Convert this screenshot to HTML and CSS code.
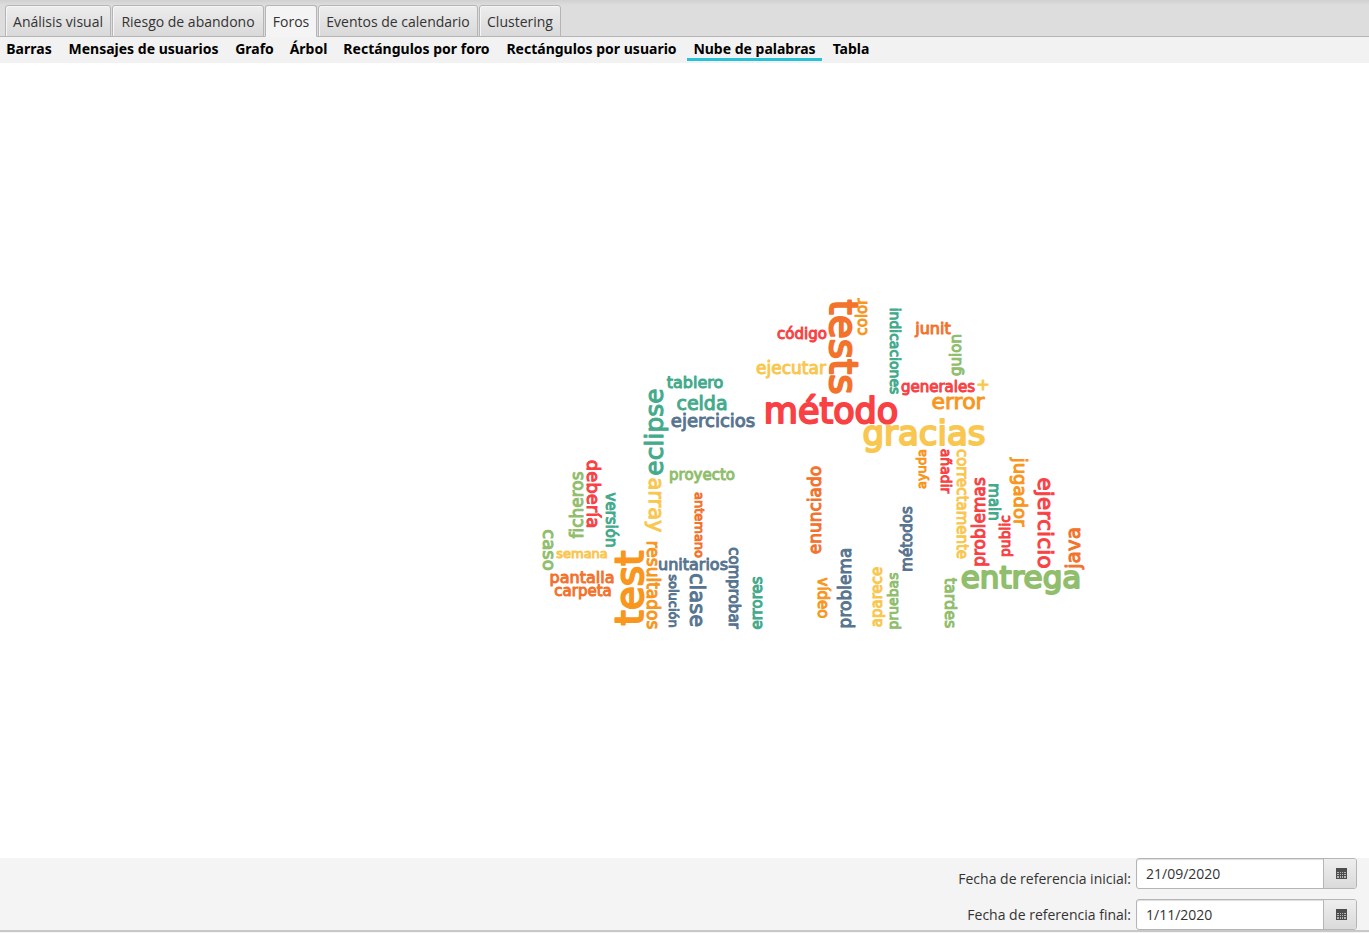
FILE: index.html
```html
<!DOCTYPE html>
<html lang="es">
<head>
<meta charset="utf-8">
<title>Foros</title>
<link rel="stylesheet" href="styles.css">
</head>
<body>
<nav class="tabs" aria-label="Secciones">
  <button class="tab">Análisis visual</button>
  <button class="tab">Riesgo de abandono</button>
  <button class="tab tab-active">Foros</button>
  <button class="tab">Eventos de calendario</button>
  <button class="tab">Clustering</button>
</nav>
<nav class="subtabs" aria-label="Gráficos">
  <button class="subtab">Barras</button>
  <button class="subtab">Mensajes de usuarios</button>
  <button class="subtab">Grafo</button>
  <button class="subtab">Árbol</button>
  <button class="subtab">Rectángulos por foro</button>
  <button class="subtab">Rectángulos por usuario</button>
  <button class="subtab subtab-active">Nube de palabras</button>
  <button class="subtab">Tabla</button>
</nav>
<main class="chart">
  <svg class="cloud" id="cloud" viewBox="0 63 1369 795" role="img" aria-label="Nube de palabras"></svg>
</main>
<form class="dates">
  <label class="date-label date-label-first" for="start">Fecha de referencia inicial:</label>
  <div class="date-field">
    <input class="date-input" id="start" type="text" value="21/09/2020">
    <button class="date-button" type="button" aria-label="Elegir fecha inicial">
      <svg class="calendar" viewBox="0 0 11 11"><path fill="#4d4d4d" d="M0 0h11v11H0z"/><path fill="#b4b4b4" d="M1 4h2v1H1zM4 4h1v1H4zM6 4h1v1H6zM8 4h2v1H8zM1 6h2v1H1zM4 6h1v1H4zM6 6h1v1H6zM8 6h2v1H8zM1 8h2v2H1zM4 8h1v2H4zM6 8h1v2H6zM8 8h2v2H8z"/></svg>
    </button>
  </div>
  <label class="date-label" for="end">Fecha de referencia final:</label>
  <div class="date-field">
    <input class="date-input" id="end" type="text" value="1/11/2020">
    <button class="date-button" type="button" aria-label="Elegir fecha final">
      <svg class="calendar" viewBox="0 0 11 11"><path fill="#4d4d4d" d="M0 0h11v11H0z"/><path fill="#b4b4b4" d="M1 4h2v1H1zM4 4h1v1H4zM6 4h1v1H6zM8 4h2v1H8zM1 6h2v1H1zM4 6h1v1H4zM6 6h1v1H6zM8 6h2v1H8zM1 8h2v2H1zM4 8h1v2H4zM6 8h1v2H6zM8 8h2v2H8z"/></svg>
    </button>
  </div>
</form>
<script src="cloud.js"></script>
</body>
</html>
```

FILE: styles.css
```css
* { box-sizing: border-box; }

body {
  margin: 0;
  min-height: 100vh;
  display: flex;
  flex-direction: column;
  background: #f4f4f4;
  color: #333;
  font: 14px/20px "Segoe UI", "Open Sans", "Noto Sans", sans-serif;
}

button, input { font: inherit; color: inherit; }

.tabs {
  display: grid;
  grid-template-columns: 106px 152px 52px 160px 82px;
  gap: 1px;
  height: 37px;
  padding: 5px 5px 0;
  background: linear-gradient(#d0d0d0, #dddddd 5px);
  border-bottom: 1px solid #b5b5b5;
}

.tab {
  height: 32px;
  padding: 2px 0 0;
  border: 1px solid #b5b5b5;
  border-radius: 3px 3px 0 0;
  background: linear-gradient(#ededed, #d9d9d9);
  box-shadow: inset 1px 1px 0 #f6f6f6;
  white-space: nowrap;
}

.tab-active {
  background: #f4f4f4;
  border-bottom-color: #f4f4f4;
}

.subtabs {
  display: grid;
  grid-template-columns: 58px 163px 51px 49px 159px 183px 135px 50px;
  gap: 4px;
  height: 26px;
  background: #f2f2f2;
}

.subtab {
  height: 24px;
  padding: 2px 0 0;
  border: 0;
  border-bottom: 3px solid transparent;
  background: none;
  color: #000;
  font: bold 14px/19px Tahoma, "Noto Sans", sans-serif;
  white-space: nowrap;
}

.subtab-active { border-bottom-color: #26c2d8; }

.chart {
  flex: 1 1 0;
  display: flex;
  min-height: 0;
  background: #fff;
}

.cloud { width: 100%; }

.word {
  font-family: "Comic Sans MS", "DejaVu Sans", sans-serif;
  text-anchor: middle;
  fill: currentColor;
  stroke: currentColor;
  stroke-width: 1px;
  stroke-linejoin: round;
}

.word-large { stroke-width: 2px; }

.red { color: #f94144; }
.orange { color: #f3722c; }
.amber { color: #f8961e; }
.yellow { color: #f9c74f; }
.green { color: #90be6d; }
.teal { color: #43aa8b; }
.blue { color: #577590; }

.dates {
  display: grid;
  grid-template-columns: 1fr 221px;
  gap: 10px 5px;
  margin: 0 0 1px;
  padding: 0 12px 0 0;
  border-bottom: 2px solid #c8c8c8;
  background: #f4f4f4;
}

.date-label {
  align-self: center;
  justify-self: end;
}

.date-label-first { padding-top: 10px; }

.date-field {
  display: flex;
  height: 31px;
  border: 1px solid #b5b5b5;
  border-radius: 3px;
  background: #fff;
  box-shadow: inset 0 1px 1px #ddd;
}

.date-input {
  flex: 1;
  min-width: 0;
  padding: 0 9px;
  border: 0;
  background: none;
}

.date-button {
  display: flex;
  align-items: center;
  justify-content: center;
  width: 33px;
  padding: 0 0 0 2px;
  border: 0;
  border-left: 1px solid #b5b5b5;
  border-radius: 0 2px 2px 0;
  background: linear-gradient(#eeeeee, #dadada);
}

.calendar {
  width: 11px;
  height: 11px;
}
```

FILE: cloud.js
```js
// text, colour, direction (0 across, 90 down, -90 up), start, end, baseline
const words = [
  ["código", "red", 0, 777, 826, 339],
  ["ejecutar", "yellow", 0, 755, 826, 374],
  ["método", "red", 0, 763, 899, 423],
  ["gracias", "yellow", 0, 863, 985, 445],
  ["generales", "red", 0, 900, 976, 392],
  ["+", "yellow", 0, 976, 989, 390],
  ["error", "amber", 0, 931, 985, 409],
  ["junit", "orange", 0, 915, 951, 334],
  ["tablero", "teal", 0, 667, 723, 388],
  ["celda", "teal", 0, 677, 727, 410],
  ["ejercicios", "blue", 0, 671, 755, 427],
  ["proyecto", "green", 0, 669, 734, 480],
  ["semana", "yellow", 0, 556, 608, 558],
  ["pantalla", "orange", 0, 549, 614, 583],
  ["carpeta", "orange", 0, 554, 611, 596],
  ["unitarios", "blue", 0, 659, 727, 570],
  ["entrega", "green", 0, 960, 1081, 588],
  ["tests", "orange", 90, 300, 394, 830],
  ["indicaciones", "teal", 90, 307, 395, 890],
  ["array", "yellow", 90, 478, 532, 649],
  ["caso", "green", 90, 529, 570, 543],
  ["debería", "red", 90, 459, 528, 587],
  ["versión", "teal", 90, 492, 547, 606],
  ["antemano", "orange", 90, 492, 558, 695],
  ["resultados", "amber", 90, 542, 628, 647],
  ["solución", "blue", 90, 574, 628, 669],
  ["clase", "blue", 90, 572, 627, 690],
  ["comprobar", "blue", 90, 548, 627, 729],
  ["vídeo", "amber", 90, 578, 618, 818],
  ["añadir", "red", 90, 449, 493, 941],
  ["correctamente", "yellow", 90, 449, 559, 957],
  ["tardes", "green", 90, 577, 628, 945],
  ["main", "teal", 90, 483, 521, 989],
  ["jugador", "amber", 90, 458, 526, 1014],
  ["ejercicio", "red", 90, 477, 568, 1038],
  ["color", "amber", -90, 299, 335, 867],
  ["guion", "green", -90, 334, 376, 961],
  ["eclipse", "teal", -90, 388, 475, 663],
  ["ficheros", "green", -90, 471, 539, 583],
  ["test", "amber", -90, 550, 625, 643],
  ["errores", "teal", -90, 577, 629, 762],
  ["enunciado", "orange", -90, 466, 554, 821],
  ["problema", "blue", -90, 546, 629, 851],
  ["aparece", "yellow", -90, 566, 628, 882],
  ["pruebas", "green", -90, 573, 628, 898],
  ["métodos", "blue", -90, 507, 571, 912],
  ["ayuda", "amber", -90, 449, 489, 926],
  ["problemas", "red", -90, 478, 566, 985],
  ["public", "red", -90, 515, 557, 1010],
  ["java", "orange", -90, 527, 568, 1080]
];

const cloud = document.getElementById("cloud");
const ruler = document.createElement("canvas").getContext("2d");
ruler.font = '100px "Comic Sans MS", "DejaVu Sans", sans-serif';

for (const [text, colour, angle, start, end, base] of words) {
  const size = Math.round(100 * (end - start) / ruler.measureText(text).width);
  const middle = Math.round((start + end) / 2);
  const [x, y] = angle === 0 ? [middle, base] : [base, middle];
  const node = document.createElementNS("http://www.w3.org/2000/svg", "text");
  node.setAttribute("class", `word ${colour}${size > 26 ? " word-large" : ""}`);
  node.setAttribute("font-size", size);
  node.setAttribute("transform", `translate(${x} ${y}) rotate(${angle})`);
  node.textContent = text;
  cloud.append(node);
}
```
